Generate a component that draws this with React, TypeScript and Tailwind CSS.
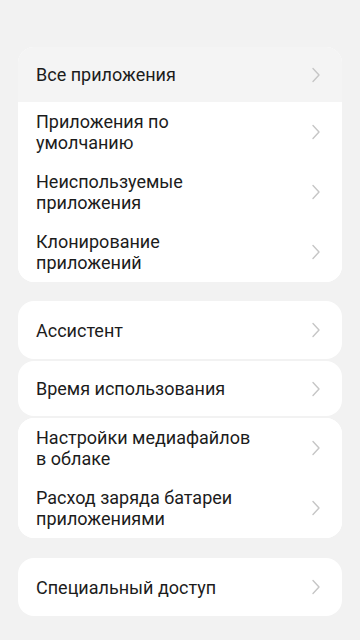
import React from 'react';

type Item = { lines: string[]; pressed?: boolean };

const Chevron: React.FC = () => (
  <svg width="10" height="16" viewBox="0 0 10 16" fill="none" className="shrink-0">
    <polyline points="2,1.5 8,8 2,14.5" stroke="#c6c6c6" strokeWidth="1.4" strokeLinecap="round" strokeLinejoin="round" />
  </svg>
);

const Row: React.FC<{ item: Item; tall?: boolean }> = ({ item, tall }) => {
  const single = item.lines.length === 1;
  return (
    <div
      className={`flex items-center justify-between pl-[18px] pr-[21px] ${single ? (tall ? 'h-[58px]' : 'h-[55px]') : 'h-[60px]'} ${item.pressed ? 'bg-[#f4f4f4]' : 'bg-white'}`}
    >
      <div className="text-[18px] leading-[21px] text-[#1c1c1c]">
        {item.lines.map((l) => (
          <div key={l}>{l}</div>
        ))}
      </div>
      <Chevron />
    </div>
  );
};

const Card: React.FC<{ items: Item[]; tall?: boolean }> = ({ items, tall }) => (
  <div className="mx-[18px] rounded-[16px] bg-white overflow-hidden">
    {items.map((it) => (
      <Row key={it.lines.join(' ')} item={it} tall={tall} />
    ))}
  </div>
);

export default function App() {
  return (
    <div
      className="w-[360px] h-[640px] bg-[#f2f2f2] overflow-hidden pt-[47px]"
      style={{ fontFamily: 'Roboto, "Noto Sans", sans-serif' }}
    >
      <Card
        items={[
          { lines: ['Все приложения'], pressed: true },
          { lines: ['Приложения по', 'умолчанию'] },
          { lines: ['Неиспользуемые', 'приложения'] },
          { lines: ['Клонирование', 'приложений'] },
        ]}
      />
      <div className="mt-[19px] flex flex-col gap-[2px]">
        <Card items={[{ lines: ['Ассистент'] }]} tall />
        <Card items={[{ lines: ['Время использования'] }]} />
        <Card
          items={[
            { lines: ['Настройки медиафайлов', 'в облаке'] },
            { lines: ['Расход заряда батареи', 'приложениями'] },
          ]}
        />
      </div>
      <div className="mt-[20px]">
        <Card items={[{ lines: ['Специальный доступ'] }]} tall />
      </div>
    </div>
  );
}
